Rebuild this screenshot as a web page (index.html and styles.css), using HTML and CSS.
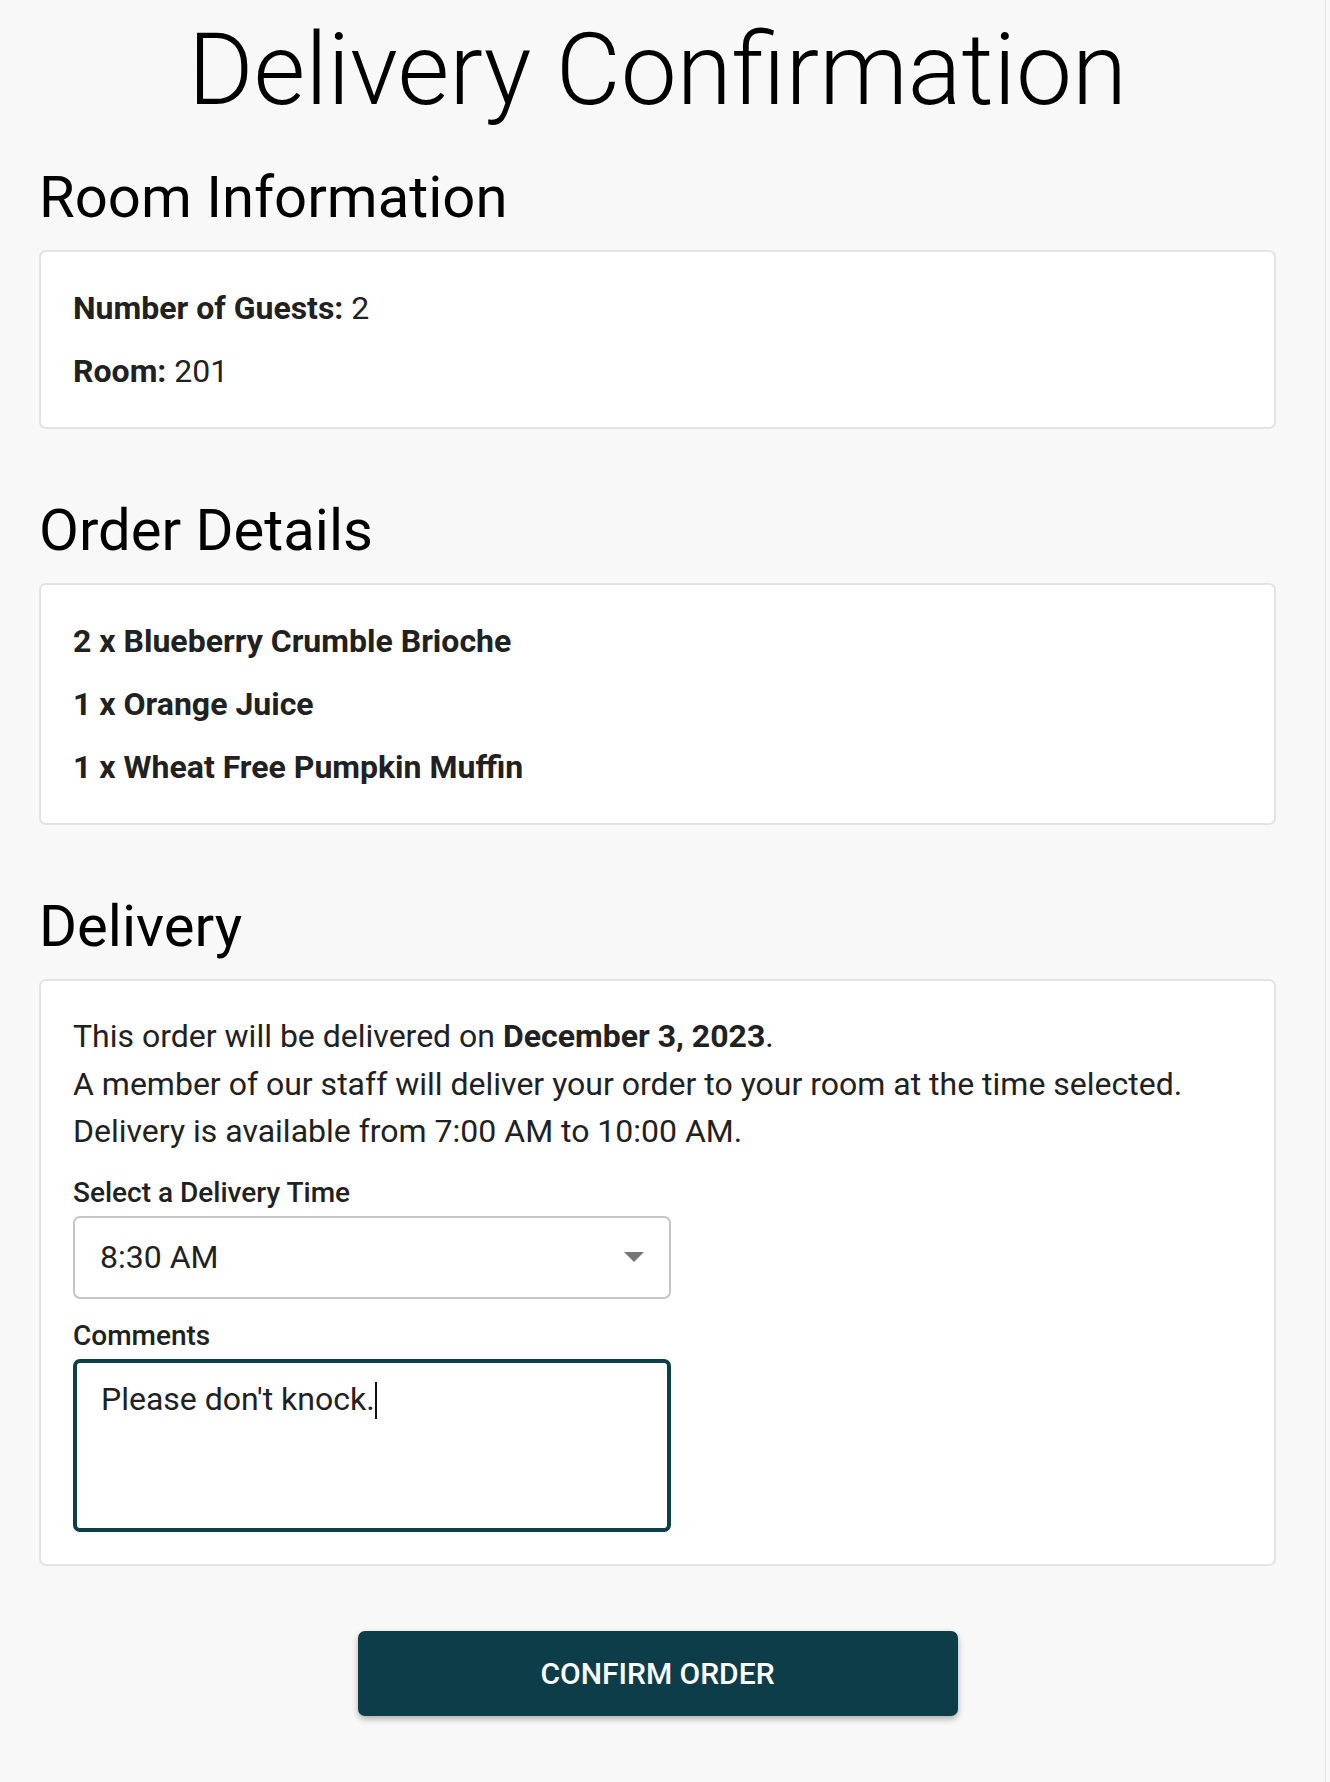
FILE: index.html
```html
<!DOCTYPE html>
<html lang="en">
<head>
    <meta charset="UTF-8">
    <meta name="viewport" content="width=device-width, initial-scale=1.0">
    <title>Delivery Confirmation</title>
    <link rel="stylesheet" href="styles.css">
</head>
<body>

<div class="page">
    <h1 class="titulo">Delivery Confirmation</h1>

    <div class="secao">
        <h2>Room Information</h2>
        <div class="cartao">
            <p><strong>Number of Guests:</strong> 2</p>
            <p><strong>Room:</strong> 201</p>
        </div>
    </div>

    <div class="secao">
        <h2>Order Details</h2>
        <div class="cartao">
            <p><strong>2 x Blueberry Crumble Brioche</strong></p>
            <p><strong>1 x Orange Juice</strong></p>
            <p><strong>1 x Wheat Free Pumpkin Muffin</strong></p>
        </div>
    </div>

    <div class="secao">
        <h2>Delivery</h2>
        <div class="cartao">
            <p class="info-entrega">This order will be delivered on <strong>December 3, 2023</strong>.<br>
            A member of our staff will deliver your order to your room at the time selected.<br>
            Delivery is available from 7:00 AM to 10:00 AM.</p>

            <div class="campo">
                <label>Select a Delivery Time</label>
                <div class="select">
                    <span>8:30 AM</span>
                    <svg width="20" height="10" viewBox="0 0 20 10"><path d="M0 0h20L10 10z" fill="#767676"/></svg>
                </div>
            </div>

            <div class="campo">
                <label>Comments</label>
                <div class="textarea">Please don't knock.<span class="cursor"></span></div>
            </div>
        </div>
    </div>

    <div class="acoes">
        <button class="botao-confirmar">CONFIRM ORDER</button>
    </div>
</div>

</body>
</html>
```

FILE: styles.css
```css
body {
    font-family: 'Roboto', 'Liberation Sans', sans-serif;
    margin: 0;
    padding: 0;
    background-color: #f8f8f8;
    color: #212121;
}
.page {
    width: 1326px;
    min-height: 100vh;
    box-sizing: border-box;
    padding: 10px 49px 60px 39px;
    border-right: 1px solid #e2e2e2;
}
.titulo {
    margin: 0;
    font-size: 100px;
    line-height: 120px;
    font-weight: 300;
    color: #000;
    text-align: center;
}
.secao {
    margin-top: 65px;
}
.secao:first-of-type {
    margin-top: 31px;
}
h2 {
    margin: 0 0 17px;
    font-size: 58px;
    line-height: 72px;
    font-weight: 400;
    color: #000;
}
.cartao {
    background-color: #fff;
    border: 2px solid #e3e3e3;
    border-radius: 7px;
    padding: 32px;
}
.cartao p {
    margin: 15px 0 0;
    font-size: 32px;
    line-height: 48px;
}
.cartao p:first-child {
    margin-top: 0;
}
.cartao strong {
    font-weight: 700;
}
.cartao .info-entrega {
    line-height: 47.5px;
}
.campo {
    margin-top: 18px;
}
.campo label {
    display: block;
    font-size: 28px;
    line-height: 38px;
    font-weight: 500;
    margin-bottom: 4px;
}
.select {
    width: 598px;
    height: 83px;
    box-sizing: border-box;
    border: 2px solid #c6c6c6;
    border-radius: 7px;
    background-color: #fff;
    padding: 0 25px;
    display: flex;
    align-items: center;
    justify-content: space-between;
    font-size: 32px;
}
.textarea {
    width: 598px;
    height: 173px;
    box-sizing: border-box;
    border: 4px solid #0e3e48;
    border-radius: 7px;
    background-color: #fff;
    padding: 12px 24px;
    font-size: 32px;
    line-height: 48px;
}
.cursor {
    display: inline-block;
    width: 2px;
    height: 37px;
    background-color: #111;
    vertical-align: -9px;
}
.acoes {
    display: flex;
    justify-content: center;
    margin-top: 65px;
}
.botao-confirmar {
    width: 600px;
    height: 85px;
    background-color: #0d3d49;
    color: #fff;
    border: none;
    border-radius: 7px;
    font-family: 'Roboto', 'Liberation Sans', sans-serif;
    font-size: 30px;
    font-weight: 500;
    box-shadow: 0 3px 6px rgba(0, 0, 0, 0.3);
    cursor: pointer;
}
```
